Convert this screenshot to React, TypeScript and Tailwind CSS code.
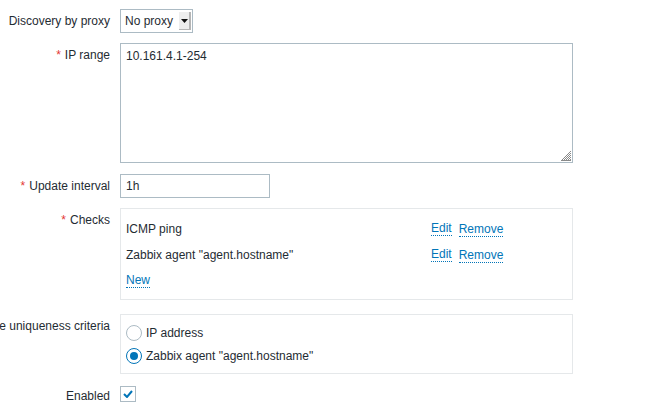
const font = { fontFamily: '"Liberation Sans", Arial, sans-serif' }

function Req() {
  return <span className="text-[#e33734] mr-[4px]">*</span>
}

function Label({ children }: { children: React.ReactNode }) {
  return (
    <div className="w-[120px] shrink-0 pr-[10px] flex justify-end h-[24px] items-center">
      <span className="whitespace-nowrap">{children}</span>
    </div>
  )
}

function Link({ children }: { children: React.ReactNode }) {
  return (
    <a href="#" className="text-[#0275b8] border-b border-dotted border-[#0275b8] leading-[13px]">
      {children}
    </a>
  )
}

function Radio({ checked }: { checked?: boolean }) {
  return (
    <span
      className={
        'w-[16px] h-[16px] rounded-full border bg-white flex items-center justify-center shrink-0 ' +
        (checked ? 'border-[#0275b8]' : 'border-[#acbbc4]')
      }
    >
      {checked && <span className="w-[8px] h-[8px] rounded-full bg-[#0275b8]" />}
    </span>
  )
}

export default function App() {
  return (
    <div className="min-h-screen bg-white text-[12px] text-[#1f2c33] overflow-hidden" style={font}>
      <div className="flex flex-col">
        {/* Discovery by proxy */}
        <div className="flex mt-[9px]">
          <Label>Discovery by proxy</Label>
          <div className="w-[73px] h-[24px] border border-[#acbbc4] bg-white flex items-stretch">
            <span className="flex-1 pl-[4px] flex items-center">No proxy</span>
            <span className="w-[12px] my-[2px] mr-[1px] bg-[#eeeeee] border-r-2 border-b border-[#b5b5b5] flex items-center justify-center">
              <svg width="7" height="4" viewBox="0 0 7 4">
                <path d="M0 0h7L3.5 4z" fill="#111" />
              </svg>
            </span>
          </div>
        </div>

        {/* IP range */}
        <div className="flex mt-[10px]">
          <Label>
            <Req />IP range
          </Label>
          <div className="relative w-[453px] h-[120px] border border-[#acbbc4] bg-white pl-[5px] pt-[5px] leading-[14px]">
            10.161.4.1-254
            <svg className="absolute right-[1px] bottom-[1px]" width="10" height="10" viewBox="0 0 10 10">
              <g fill="#8a8a8a">
                <rect x="9" y="0" width="1" height="1" />
                <rect x="8" y="1" width="1" height="1" />
                <rect x="7" y="2" width="1" height="1" />
                <rect x="9" y="2" width="1" height="1" />
                <rect x="6" y="3" width="1" height="1" />
                <rect x="8" y="3" width="1" height="1" />
                <rect x="5" y="4" width="1" height="1" />
                <rect x="7" y="4" width="1" height="1" />
                <rect x="9" y="4" width="1" height="1" />
                <rect x="4" y="5" width="1" height="1" />
                <rect x="6" y="5" width="1" height="1" />
                <rect x="8" y="5" width="1" height="1" />
                <rect x="3" y="6" width="1" height="1" />
                <rect x="5" y="6" width="1" height="1" />
                <rect x="7" y="6" width="1" height="1" />
                <rect x="9" y="6" width="1" height="1" />
                <rect x="2" y="7" width="1" height="1" />
                <rect x="4" y="7" width="1" height="1" />
                <rect x="6" y="7" width="1" height="1" />
                <rect x="8" y="7" width="1" height="1" />
                <rect x="1" y="8" width="1" height="1" />
                <rect x="3" y="8" width="1" height="1" />
                <rect x="5" y="8" width="1" height="1" />
                <rect x="7" y="8" width="1" height="1" />
                <rect x="9" y="8" width="1" height="1" />
                <rect x="0" y="9" width="10" height="1" />
              </g>
            </svg>
          </div>
        </div>

        {/* Update interval */}
        <div className="flex mt-[11px]">
          <Label>
            <Req />Update interval
          </Label>
          <div className="w-[150px] h-[24px] border border-[#acbbc4] bg-white pl-[5px] flex items-center">1h</div>
        </div>

        {/* Checks */}
        <div className="flex mt-[10px]">
          <Label>
            <Req />Checks
          </Label>
          <div className="w-[453px] border border-[#e5e8ea] bg-white pl-[5px] pt-[7px] pb-[5px]">
            <div className="flex items-center h-[26px]">
              <span className="w-[305px]">ICMP ping</span>
              <Link>Edit</Link>
              <span className="ml-[7px]">
                <Link>Remove</Link>
              </span>
            </div>
            <div className="flex items-center h-[26px]">
              <span className="w-[305px]">Zabbix agent "agent.hostname"</span>
              <Link>Edit</Link>
              <span className="ml-[7px]">
                <Link>Remove</Link>
              </span>
            </div>
            <div className="flex items-center h-[26px]">
              <Link>New</Link>
            </div>
          </div>
        </div>

        {/* Device uniqueness criteria */}
        <div className="flex mt-[14px]">
          <Label>Device uniqueness criteria</Label>
          <div className="w-[453px] h-[60px] border border-[#e5e8ea] bg-white pl-[5px] pt-[6px]">
            <div className="flex items-center h-[23px] gap-[4px]">
              <Radio />
              <span>IP address</span>
            </div>
            <div className="flex items-center h-[23px] gap-[4px]">
              <Radio checked />
              <span>Zabbix agent "agent.hostname"</span>
            </div>
          </div>
        </div>

        {/* Enabled */}
        <div className="flex mt-[10px]">
          <Label>Enabled</Label>
          <span className="mt-[2px] w-[16px] h-[16px] border border-[#acbbc4] bg-white flex items-center justify-center">
            <svg width="10" height="8" viewBox="0 0 10 8">
              <path d="M1 4l3 3 5-6" fill="none" stroke="#0275b8" strokeWidth="2" />
            </svg>
          </span>
        </div>
      </div>
    </div>
  )
}
